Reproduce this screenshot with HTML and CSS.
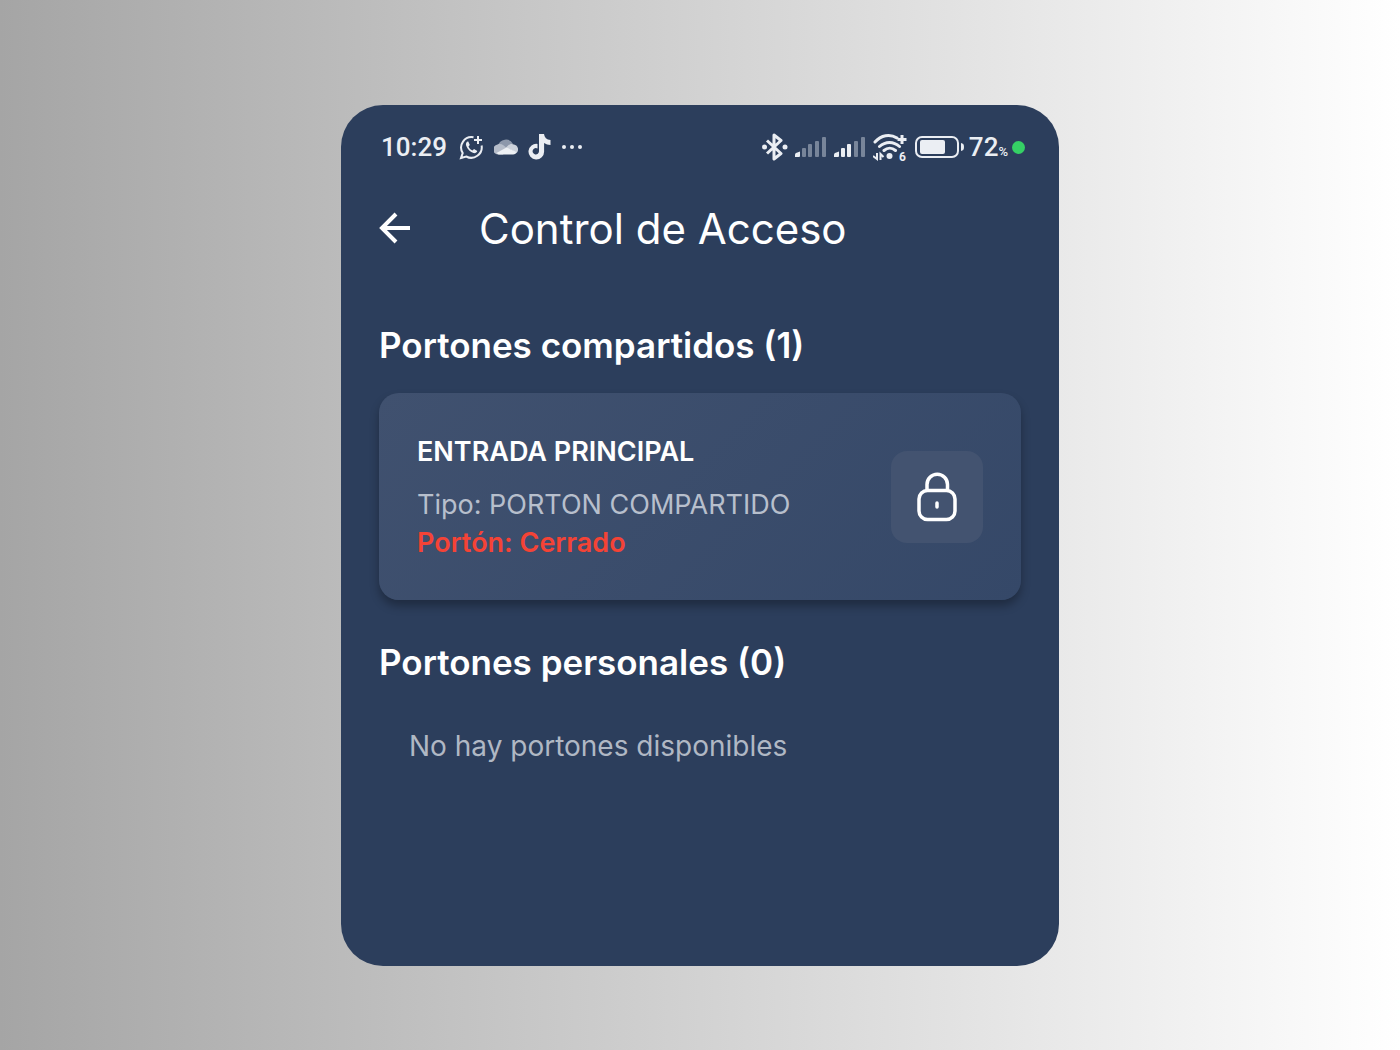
FILE: index.html
```
<!DOCTYPE html>
<html lang="es">

<head>
  <meta charset="UTF-8">
  <meta name="viewport" content="width=device-width, initial-scale=1.0">
  <title>Control de Acceso</title>
  <link rel="stylesheet" href="styles.css">
</head>

<body>
  <main class="phone">
    <div class="status-bar">
      <div class="status-left">
        <span class="time">10:29</span>
        <svg class="icon-whatsapp" width="25" height="25" viewBox="0 0 25 25" fill="none" stroke="currentColor" stroke-width="2">
          <path d="M14.5 2.2A10.5 10.5 0 0 0 3.7 18L2 23l5.300-1.500A10.500 10.500 0 0 0 22.600 10.500" />
          <path d="M19 1v8M15 5h8" />
          <path d="M8.500 6.500c-1.500 1-2 2.500-1.200 4.500 1.500 3.500 4 6 7.200 7 1.600.5 3.200-.2 3.800-2l-3.300-2-1.500 1.400c-2-.8-3.200-2-4-4l1.300-1.500-1.500-3.400z" fill="currentColor" stroke="none" />
        </svg>
        <svg class="icon-cloud" width="24" height="16" viewBox="0 0 24 16">
          <path d="M4 7a8 8 0 0 1 15-2l-6 6z" fill="#8d98ab" />
          <path d="M5 15.500a5 5 0 0 1-1.500-10c4-1.500 6 1 10 4L9 15.500z" fill="#b6bdca" />
          <path d="M12 9c2-3.500 5-5 8-3.500a5 5 0 0 1 3 8z" fill="#cdd2db" />
          <path d="M2.500 14l10-5.500 10.500 4.500c-.8 1.600-2 2.500-4 2.500H5.500c-1 0-2.300-.6-3-1.500z" fill="#edf0f4" />
        </svg>
        <svg class="icon-tiktok" width="24" height="26" viewBox="0 0 24 26" fill="currentColor">
          <path d="M11 0h5c.4 3.500 2.500 5.600 6.500 6v5c-2.500 0-4.500-.7-6.400-2v8.500A7.800 7.800 0 1 1 9.500 9.900v4.700a3.200 3.200 0 1 0 1.500 2.700z" />
        </svg>
        <svg class="icon-more" width="20" height="4" viewBox="0 0 20 4" fill="currentColor">
          <circle cx="2" cy="2" r="2" />
          <circle cx="10" cy="2" r="2" />
          <circle cx="18" cy="2" r="2" />
        </svg>
      </div>
      <div class="status-right">
        <svg width="26" height="28" viewBox="0 0 26 28" fill="none" stroke="currentColor" stroke-width="3">
          <path d="M5 7.500l14 13-7 5.500V2l7 5.500-14 13" stroke-linejoin="round" />
          <circle cx="2.500" cy="14" r="2.500" fill="currentColor" stroke="none" />
          <circle cx="23" cy="14" r="2.500" fill="currentColor" stroke="none" />
        </svg>
        <svg class="icon-signal" width="32" height="20" viewBox="0 0 32 20" fill="#78859a">
          <path d="M0 20v-2.500q0-1 1-1.500l4-1.500V19q0 1-1 1z" fill="#ebeef3" />
          <rect x="7" y="11" width="4" height="9" rx="1" />
          <rect x="13" y="7" width="4" height="13" rx="1" />
          <rect x="20" y="4" width="4" height="16" rx="1" />
          <rect x="27" y="0" width="4" height="20" rx="1" />
        </svg>
        <svg class="icon-signal" width="32" height="20" viewBox="0 0 32 20" fill="#ebeef3">
          <path d="M0 20v-2.500q0-1 1-1.500l4-1.500V19q0 1-1 1z" />
          <rect x="7" y="11" width="4" height="9" rx="1" />
          <rect x="13" y="7" width="4" height="13" rx="1" />
          <rect x="20" y="4" width="4" height="16" rx="1" fill="#78859a" />
          <rect x="27" y="0" width="4" height="20" rx="1" fill="#78859a" />
        </svg>
        <svg class="icon-wifi" width="35" height="32" viewBox="0 0 35 32" fill="none" stroke="currentColor" stroke-width="3">
          <path d="M2 11c6-7 15-8.500 22-4M6.500 15.500c6-5.500 14-5.500 20 0M11 19.500c3.500-3 8-3 11.500 0" stroke-linecap="round" />
          <path d="M29 4v9M24.500 8.500h9" />
          <circle cx="16.500" cy="25" r="3" fill="currentColor" stroke="none" />
          <path d="M0 25l4 3v-6M7.500 29v-6l3 3" stroke-width="2" />
          <text class="wifi-gen" x="26" y="30">6</text>
        </svg>
        <svg class="icon-battery" width="49" height="22" viewBox="0 0 49 22" fill="none" stroke="currentColor" stroke-width="2">
          <rect x="1" y="1" width="42" height="20" rx="6" />
          <rect x="5" y="4" width="25" height="14" rx="2" fill="currentColor" stroke="none" />
          <path d="M46 7c2 .5 3 1 3 4s-1 3.500-3 4z" fill="currentColor" stroke="none" />
        </svg>
        <span class="battery-level">72<small>%</small></span>
        <span class="dot"></span>
      </div>
    </div>

    <header class="app-bar">
      <button class="back" type="button" aria-label="Volver">
        <svg width="32" height="32" viewBox="0 0 32 32" fill="none" stroke="currentColor" stroke-width="4">
          <path d="M17 2L3 16l14 14M3 16h28" />
        </svg>
      </button>
      <h1>Control de Acceso</h1>
    </header>

    <section>
      <h2>Portones compartidos (1)</h2>
      <article class="card">
        <div class="info">
          <h3>ENTRADA PRINCIPAL</h3>
          <p class="type">Tipo: PORTON COMPARTIDO</p>
          <p class="state">Portón: Cerrado</p>
        </div>
        <button class="lock" type="button" aria-label="Abrir portón">
          <svg width="40" height="50" viewBox="0 0 40 50" fill="none" stroke="currentColor" stroke-width="3.500">
            <path d="M10 18v-5.500a10.200 10.200 0 0 1 20.500 0V18" />
            <rect x="2" y="18.500" width="36" height="29" rx="8.500" />
            <path d="M20 31v4" stroke-linecap="round" />
          </svg>
        </button>
      </article>
    </section>

    <section>
      <h2>Portones personales (0)</h2>
      <p class="empty">No hay portones disponibles</p>
    </section>
  </main>
</body>

</html>
```

FILE: styles.css
```
* {
  box-sizing: border-box;
  margin: 0;
  padding: 0;
}

body {
  min-height: 100vh;
  padding: 10vh 16px 8vh;
  display: flex;
  justify-content: center;
  background: linear-gradient(to right, #a5a5a5, white);
  font-family: 'Inter', sans-serif;
  color: white;
}

.phone {
  width: 100%;
  max-width: 718px;
  padding: 24px 38px;
  border-radius: 42px;
  background: #2c3e5c;
}

.status-bar,
.status-left,
.status-right {
  display: flex;
  align-items: center;
}

.status-bar {
  justify-content: space-between;
  height: 36px;
  color: #ebeef3;
  font-family: 'Roboto', sans-serif;
  font-size: 26px;
  font-weight: 500;
  margin-right: -4px;
}

.status-left {
  gap: 10px;
  padding-left: 2px;
}

.time {
  margin-right: 2px;
}

.status-right {
  gap: 7px;
}

.wifi-gen {
  fill: currentColor;
  stroke: none;
  font-size: 12px;
  font-weight: bold;
}

.battery-level {
  margin-left: -2px;
}

.battery-level small {
  font-size: 13px;
}

.dot {
  width: 13px;
  height: 13px;
  margin-left: -3px;
  border-radius: 50%;
  background: #35d065;
}

.app-bar {
  display: flex;
  align-items: center;
  gap: 68px;
  height: 60px;
  margin: 33px 0 57px;
}

button {
  border: none;
  background: none;
  color: white;
  cursor: pointer;
}

.back,
.lock {
  display: flex;
  align-items: center;
  justify-content: center;
}

h1 {
  font-size: 42px;
  font-weight: 400;
}

h2 {
  font-size: 35px;
  font-weight: 600;
  line-height: 60px;
}

.card {
  display: flex;
  align-items: center;
  justify-content: space-between;
  margin: 18px 0 32px;
  padding: 38px;
  border-radius: 20px;
  background: linear-gradient(135deg, #40516f, #354868);
  box-shadow: 0 6px 10px rgba(0, 0, 0, 0.3);
}

.info {
  font-size: 27px;
  line-height: 38px;
}

h3 {
  font-size: 27px;
  font-weight: 600;
  line-height: 42px;
  margin-bottom: 13px;
}

.type {
  color: #b7bfcc;
}

.state {
  color: #f44336;
  font-weight: 600;
}

.lock {
  flex-shrink: 0;
  width: 92px;
  height: 92px;
  border-radius: 16px;
  background: #435370;
}

.empty {
  margin-top: 34px;
  padding-left: 30px;
  color: #b0b8c4;
  font-size: 28px;
  line-height: 40px;
}
```
